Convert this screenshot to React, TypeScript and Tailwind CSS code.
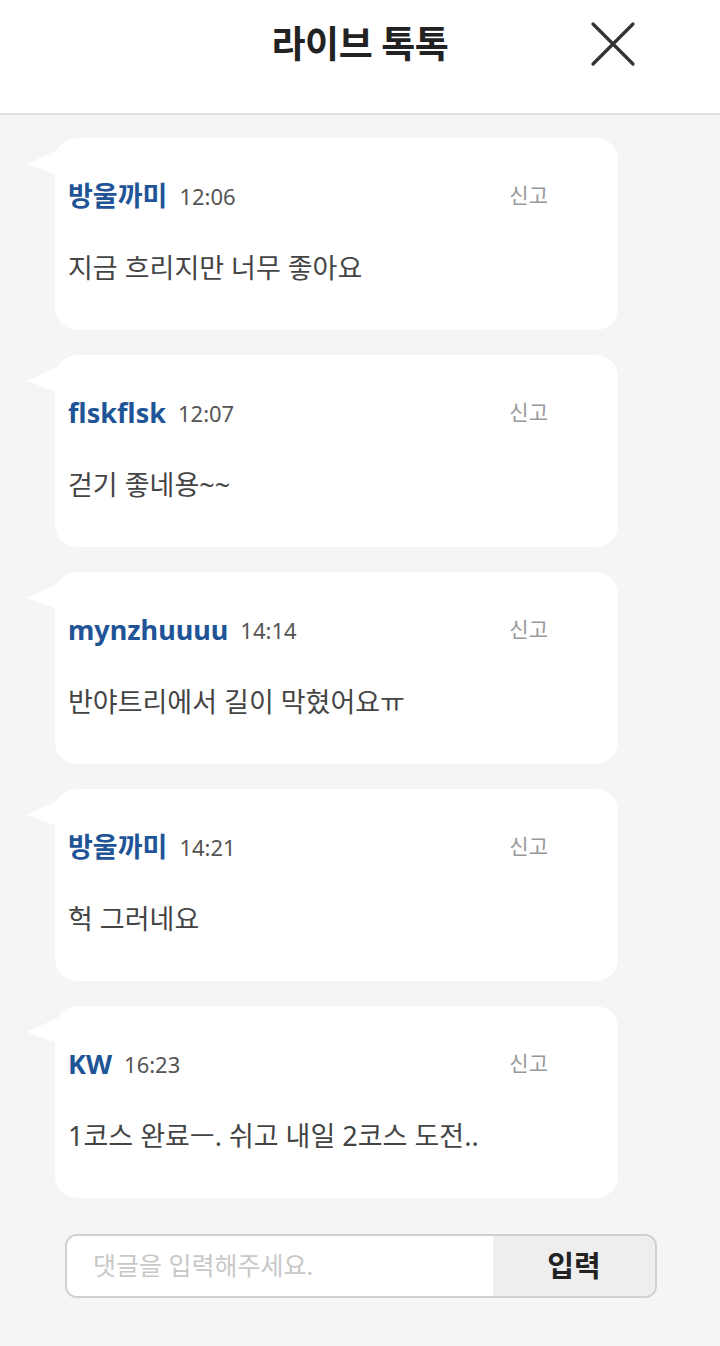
type Msg = { name: string; time: string; text: string };

const messages: Msg[] = [
  { name: '방울까미', time: '12:06', text: '지금 흐리지만 너무 좋아요' },
  { name: 'flskflsk', time: '12:07', text: '걷기 좋네용~~' },
  { name: 'mynzhuuuu', time: '14:14', text: '반야트리에서 길이 막혔어요ㅠ' },
  { name: '방울까미', time: '14:21', text: '헉 그러네요' },
  { name: 'KW', time: '16:23', text: '1코스 완료ㅡ. 쉬고 내일 2코스 도전..' },
];

function Bubble({ msg }: { msg: Msg }) {
  return (
    <div className="relative h-[192px] rounded-[22px] bg-white pl-[13px] pr-[70px] pt-[40px]">
      {/* tail */}
      <svg className="absolute left-[-28px] top-[8px]" width="32" height="32" viewBox="0 0 32 32">
        <path d="M0 18 L32 3 L32 30 Z" fill="#ffffff" />
      </svg>
      <div className="flex h-[36px] items-center">
        <span className="text-[27px] font-bold text-[#1f5597]">{msg.name}</span>
        <span className="ml-[12px] text-[22px] text-[#555]">{msg.time}</span>
        <span className="ml-auto text-[21px] text-[#999]">신고</span>
      </div>
      <p className="mt-[36px] text-[27px] leading-[36px] text-[#444]">{msg.text}</p>
    </div>
  );
}

export default function App() {
  return (
    <div
      className="min-h-screen w-[720px] bg-[#f5f5f5]"
      style={{ fontFamily: '"Noto Sans", "Noto Sans CJK KR", sans-serif' }}
    >
      {/* Header */}
      <header className="relative flex h-[115px] items-center justify-center border-b-2 border-[#dedede] bg-white pb-[25px]">
        <h1 className="text-[37px] font-bold tracking-[-0.5px] text-[#222]">라이브 톡톡</h1>
        <button className="absolute left-[590px] top-[21px] text-[#333]">
          <svg width="46" height="46" viewBox="0 0 46 46" fill="none" stroke="currentColor" strokeWidth="3.2" strokeLinecap="round">
            <path d="M3 3 L43 43 M43 3 L3 43" />
          </svg>
        </button>
      </header>

      {/* Messages */}
      <div className="flex w-[618px] flex-col gap-[25px] pl-[55px] pt-[23px]">
        {messages.map((m, i) => (
          <Bubble key={i} msg={m} />
        ))}
      </div>

      {/* Input */}
      <div className="ml-[65px] mt-[36px] flex h-[64px] w-[592px] overflow-hidden rounded-[12px] border-2 border-[#d0d0d0] bg-white">
        <input
          className="min-w-0 flex-1 bg-white pl-[26px] text-[25px] text-[#333] outline-none placeholder:text-[#c8c8c8]"
          placeholder="댓글을 입력해주세요."
        />
        <button className="w-[162px] bg-[#eeeeee] text-[29px] font-bold text-[#222]">입력</button>
      </div>
    </div>
  );
}
